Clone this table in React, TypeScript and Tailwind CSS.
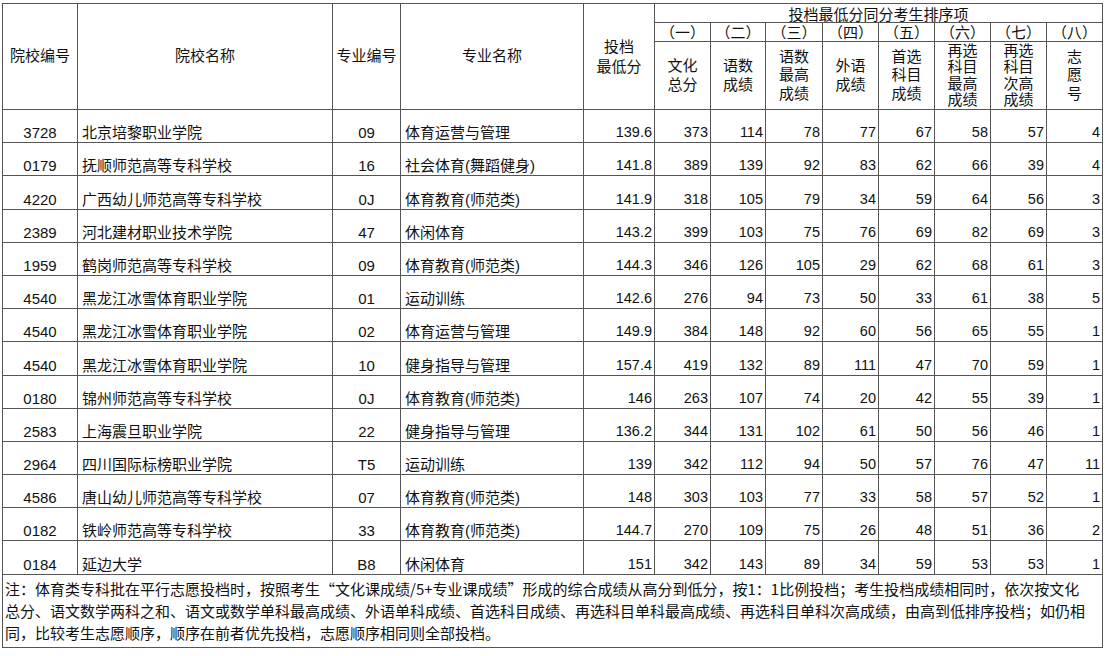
import React from 'react'

const rows: string[][] = [
  ['3728', '北京培黎职业学院', '09', '体育运营与管理', '139.6', '373', '114', '78', '77', '67', '58', '57', '4'],
  ['0179', '抚顺师范高等专科学校', '16', '社会体育(舞蹈健身)', '141.8', '389', '139', '92', '83', '62', '66', '39', '4'],
  ['4220', '广西幼儿师范高等专科学校', '0J', '体育教育(师范类)', '141.9', '318', '105', '79', '34', '59', '64', '56', '3'],
  ['2389', '河北建材职业技术学院', '47', '休闲体育', '143.2', '399', '103', '75', '76', '69', '82', '69', '3'],
  ['1959', '鹤岗师范高等专科学校', '09', '体育教育(师范类)', '144.3', '346', '126', '105', '29', '62', '68', '61', '3'],
  ['4540', '黑龙江冰雪体育职业学院', '01', '运动训练', '142.6', '276', '94', '73', '50', '33', '61', '38', '5'],
  ['4540', '黑龙江冰雪体育职业学院', '02', '体育运营与管理', '149.9', '384', '148', '92', '60', '56', '65', '55', '1'],
  ['4540', '黑龙江冰雪体育职业学院', '10', '健身指导与管理', '157.4', '419', '132', '89', '111', '47', '70', '59', '1'],
  ['0180', '锦州师范高等专科学校', '0J', '体育教育(师范类)', '146', '263', '107', '74', '20', '42', '55', '39', '1'],
  ['2583', '上海震旦职业学院', '22', '健身指导与管理', '136.2', '344', '131', '102', '61', '50', '56', '46', '1'],
  ['2964', '四川国际标榜职业学院', 'T5', '运动训练', '139', '342', '112', '94', '50', '57', '76', '47', '11'],
  ['4586', '唐山幼儿师范高等专科学校', '07', '体育教育(师范类)', '148', '303', '103', '77', '33', '58', '57', '52', '1'],
  ['0182', '铁岭师范高等专科学校', '33', '体育教育(师范类)', '144.7', '270', '109', '75', '26', '48', '51', '36', '2'],
  ['0184', '延边大学', 'B8', '休闲体育', '151', '342', '143', '89', '34', '59', '53', '53', '1'],
]

const colWidths = [
  'w-[75px]', 'w-[255px]', 'w-[68px]', 'w-[183px]', 'w-[71px]',
  'w-[56px]', 'w-[55px]', 'w-[57px]', 'w-[56px]', 'w-[56px]', 'w-[56px]', 'w-[56px]', 'w-[56px]',
]

const orders = ['（一）', '（二）', '（三）', '（四）', '（五）', '（六）', '（七）', '（八）']

const subHeads = [
  ['文化', '总分'],
  ['语数', '成绩'],
  ['语数', '最高', '成绩'],
  ['外语', '成绩'],
  ['首选', '科目', '成绩'],
  ['再选', '科目', '最高', '成绩'],
  ['再选', '科目', '次高', '成绩'],
  ['志', '愿', '号'],
]

const cell = 'border border-[#555] p-0 font-normal'

export default function App() {
  return (
    <div className="min-h-screen bg-white pl-[2px] pt-[3px] text-[15px] text-[#111] font-['Liberation_Sans','Noto_Sans_CJK_SC',sans-serif]">
      <table className="w-[1101px] table-fixed border-collapse">
        <colgroup>
          {colWidths.map((w, i) => (
            <col key={i} className={w} />
          ))}
        </colgroup>
        <thead>
          <tr className="h-[19px]">
            <th rowSpan={3} className={`${cell} text-center align-middle`}>院校编号</th>
            <th rowSpan={3} className={`${cell} text-center align-middle`}>院校名称</th>
            <th rowSpan={3} className={`${cell} text-center align-middle`}>专业编号</th>
            <th rowSpan={3} className={`${cell} text-center align-middle`}>专业名称</th>
            <th rowSpan={3} className={`${cell} text-center align-middle leading-[20px]`}>
              投档
              <br />
              最低分
            </th>
            <th colSpan={8} className={`${cell} h-[19px] text-center align-bottom leading-[15px]`}>
              投档最低分同分考生排序项
            </th>
          </tr>
          <tr className="h-[19px]">
            {orders.map((o) => (
              <th key={o} className={`${cell} h-[19px] text-center align-middle leading-[17px]`}>
                {o}
              </th>
            ))}
          </tr>
          <tr className="h-[68px]">
            {subHeads.map((lines, i) => (
              <th key={i} className={`${cell} h-[68px]`}>
                <div
                  className={`flex h-[67px] flex-col items-center justify-center overflow-hidden ${
                    lines.length > 3 ? 'leading-[16.5px]' : 'leading-[18.5px]'
                  }`}
                >
                  {lines.map((l, j) => (
                    <span key={j} className="shrink-0">
                      {l}
                    </span>
                  ))}
                </div>
              </th>
            ))}
          </tr>
        </thead>
        <tbody>
          {rows.map((r, i) => (
            <tr key={i} className="h-[33.2px]">
              {r.map((v, j) => {
                const align =
                  j === 0 || j === 2
                    ? 'text-center'
                    : j === 1 || j === 3
                      ? 'text-left pl-[4px]'
                      : 'text-right pr-[2px] text-[14.5px]'
                return (
                  <td key={j} className={`${cell} ${align} h-[33.2px] align-bottom leading-[15px] pb-[2px] whitespace-nowrap`}>
                    {v}
                  </td>
                )
              })}
            </tr>
          ))}
          <tr>
            <td colSpan={13} className={`${cell} h-[73px] align-top pl-[2px] pt-[3px] text-left leading-[22px] font-['Noto_Sans_CJK_SC','Liberation_Sans',sans-serif]`}>
              <div className="whitespace-nowrap">
                注：体育类专科批在平行志愿投档时，按照考生“文化课成绩/5+专业课成绩”形成的综合成绩从高分到低分，按1：1比例投档；考生投档成绩相同时，依次按文化
              </div>
              <div className="whitespace-nowrap">
                总分、语文数学两科之和、语文或数学单科最高成绩、外语单科成绩、首选科目成绩、再选科目单科最高成绩、再选科目单科次高成绩，由高到低排序投档；如仍相
              </div>
              <div className="whitespace-nowrap">同，比较考生志愿顺序，顺序在前者优先投档，志愿顺序相同则全部投档。</div>
            </td>
          </tr>
        </tbody>
      </table>
    </div>
  )
}
